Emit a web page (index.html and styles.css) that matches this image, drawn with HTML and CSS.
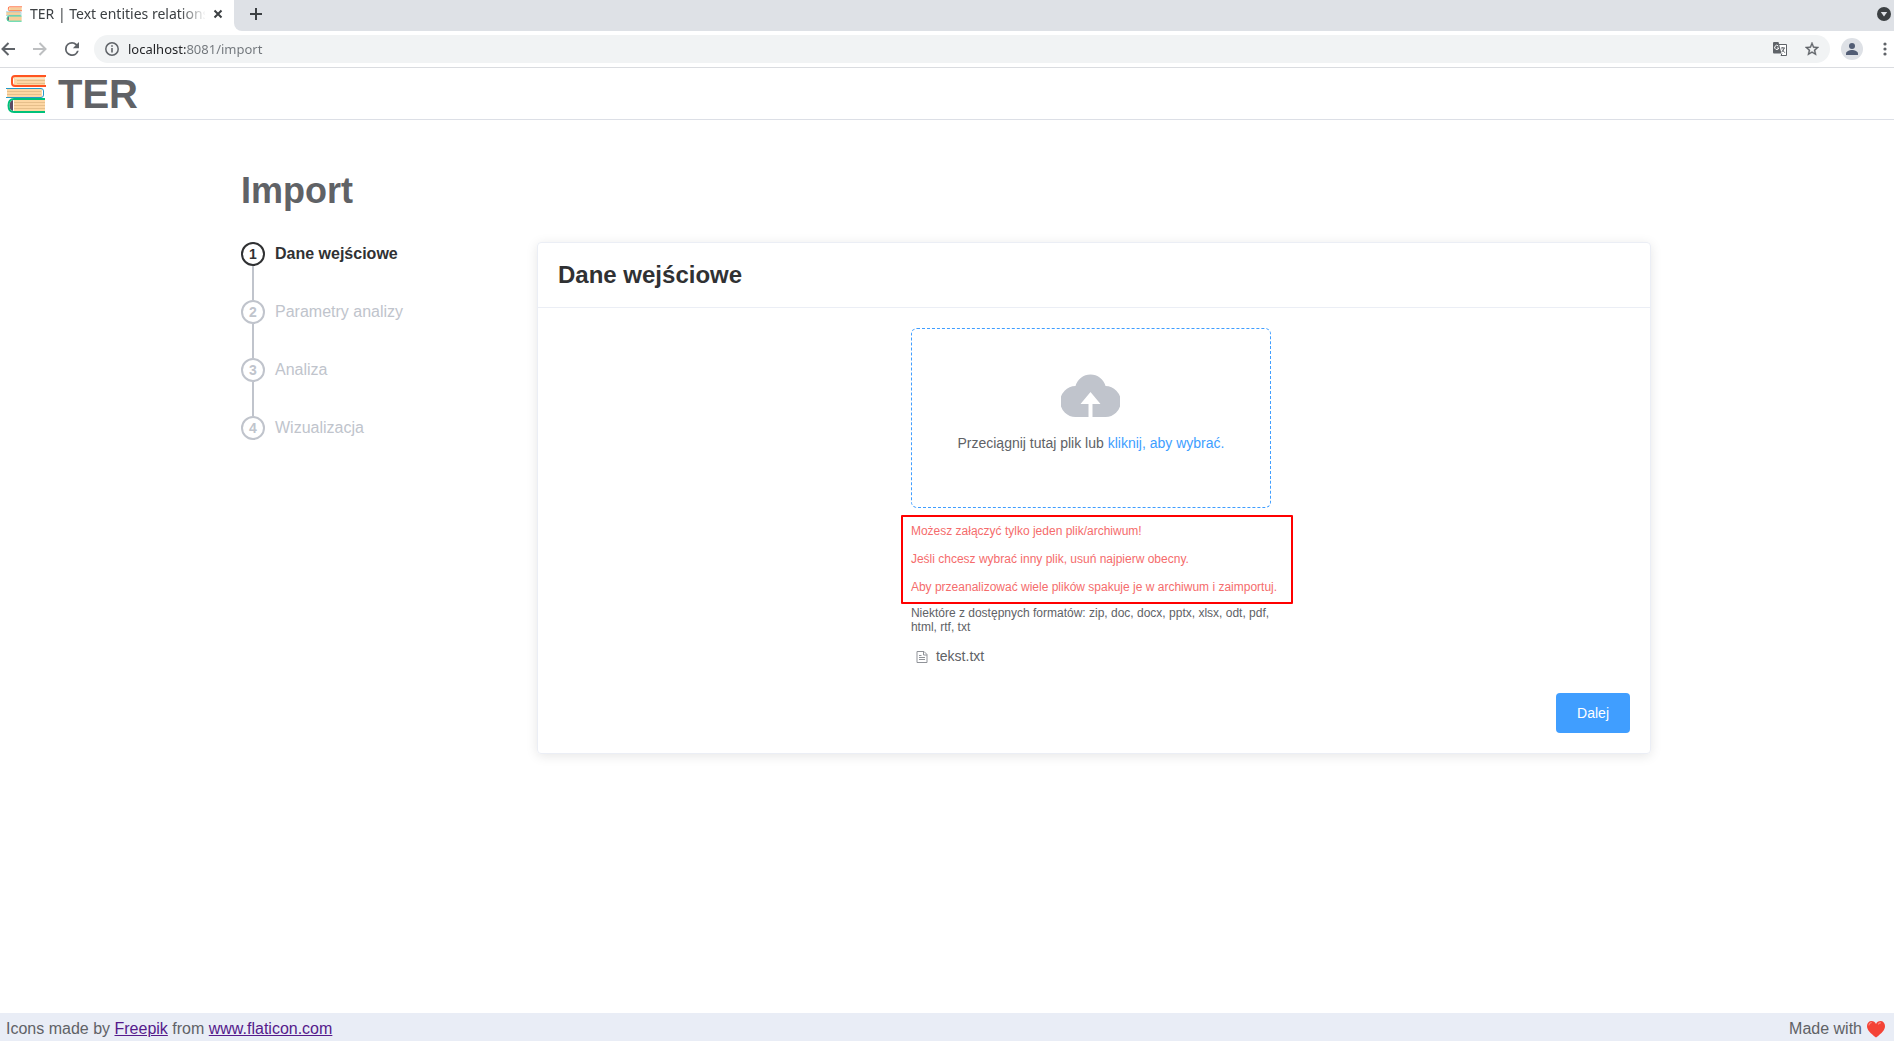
FILE: index.html
```html
<!DOCTYPE html>
<html lang="pl">
<head>
<meta charset="utf-8">
<title>TER | Text entities relations</title>
<link rel="stylesheet" href="styles.css">
</head>
<body>
<svg class="defs" width="0" height="0" aria-hidden="true">
  <symbol id="books" viewBox="0 0 40 40">
    <path d="M8 3H39V12H8z" fill="#fdd7a4"/>
    <path d="M9 4H39V5H9z" fill="#f5e6d0"/>
    <path d="M11 6.500H39M11 9.500H39" stroke="#e6bf8b" stroke-width="1"/>
    <path d="M40 2H9Q6 2 6 5V9Q6 12 9 12H40" fill="none" stroke="#ff5421" stroke-width="2"/>
    <path d="M1 15H36V23H1z" fill="#fdd7a4"/>
    <path d="M1 17.500H35M1 20.500H35" stroke="#e6bf8b" stroke-width="1"/>
    <path d="M0 14.500H35Q37.500 14.500 37.500 17V21Q37.500 23.500 35 23.500H0" fill="none" stroke="#2499c7" stroke-width="1"/>
    <path d="M8 26H39V37H8z" fill="#fdd7a4"/>
    <path d="M8 28.500H39M8 31.500H39M8 34.500H39" stroke="#e6bf8b" stroke-width="1"/>
    <path d="M7 26Q3.500 27 3.500 31.500T7 37z" fill="#5d4b63"/>
    <path d="M39 25H8Q2.500 25 2.500 31.500T8 38H39" fill="none" stroke="#00c17a" stroke-width="2"/>
  </symbol>
</svg>

<div class="browser">
  <div class="tabs">
    <div class="tab">
      <svg class="favicon"><use href="#books"/></svg>
      <span class="tab-title">TER | Text entities relations</span>
      <button class="icon-button tab-close" aria-label="Close tab"><svg width="10" height="10" viewBox="0 0 10 10"><path d="M1.500 1.500l7 7M8.500 1.500l-7 7" stroke="#3c4043" stroke-width="2"/></svg></button>
    </div>
    <div class="tab-strip">
      <button class="icon-button" aria-label="New tab"><svg width="12" height="12" viewBox="0 0 12 12"><path d="M6 0v12M0 6h12" stroke="#3c4043" stroke-width="2"/></svg></button>
      <button class="icon-button" aria-label="Search tabs"><svg width="14" height="14" viewBox="0 0 14 14"><circle cx="7" cy="7" r="7" fill="#3c4043"/><path d="M3.800 5h6.400L7 9.500z" fill="#dee1e6"/></svg></button>
    </div>
  </div>
  <div class="toolbar">
    <div class="nav">
      <button class="icon-button" aria-label="Back"><svg width="14" height="14" viewBox="0 0 14 14"><path d="M14 7H2M7.500 1L1.500 7l6 6" fill="none" stroke="#5f6368" stroke-width="2"/></svg></button>
      <button class="icon-button" aria-label="Forward" disabled><svg width="14" height="14" viewBox="0 0 14 14"><path d="M0 7h12M6.500 1l6 6-6 6" fill="none" stroke="#bdbfc1" stroke-width="2"/></svg></button>
      <button class="icon-button" aria-label="Reload"><svg width="14" height="14" viewBox="4 4 16 16"><path d="M17.650 6.350A7.960 7.960 0 0 0 12 4a8 8 0 1 0 7.730 10h-2.080A6 6 0 1 1 12 6c1.660 0 3.140.69 4.220 1.780L13 11h7V4z" fill="#5f6368"/></svg></button>
    </div>
    <div class="omnibox">
      <svg width="14" height="14" viewBox="0 0 14 14"><circle cx="7" cy="7" r="6.200" fill="none" stroke="#5f6368" stroke-width="1.500"/><path d="M7 6v4.500M7 3.300v1.500" stroke="#5f6368" stroke-width="1.600"/></svg>
      <input class="address" type="text" aria-label="Address" value="localhost:8081/import">
      <button class="icon-button" aria-label="Translate"><svg width="14" height="14" viewBox="0 0 14 14"><path d="M6 2.500h7.500v11H8" fill="#fff" stroke="#5f6368"/><path d="M1 0h4.500L8.500 11.500H1q-1 0-1-1V1q0-1 1-1z" fill="#5f6368"/><path d="M5.300 4A2.100 2.100 0 1 0 5.800 6H4" fill="none" stroke="#fff"/><path d="M8 6h4M9.800 5v1M11.200 6q-.5 2.500-2.500 4M9 7.500l2.800 3.200M8 13.500l1-2" fill="none" stroke="#5f6368"/></svg></button>
      <button class="icon-button" aria-label="Bookmark"><svg width="14" height="14" viewBox="2 2 20 20"><path d="M22 9.240l-7.190-.62L12 2 9.190 8.630 2 9.240l5.460 4.730L5.820 21 12 17.270 18.180 21l-1.630-7.030zM12 15.400l-3.760 2.270 1-4.280-3.320-2.880 4.380-.38L12 6.100l1.710 4.040 4.380.38-3.320 2.880 1 4.280z" fill="#5f6368" stroke="#5f6368" stroke-width=".5"/></svg></button>
    </div>
    <button class="icon-button" aria-label="Profile"><svg width="22" height="22" viewBox="0 0 22 22"><circle cx="11" cy="11" r="11" fill="#dee1e6"/><circle cx="11" cy="8" r="3" fill="#525d75"/><path d="M5 17v-1.500c0-2.300 3.500-3.500 6-3.500s6 1.200 6 3.500V17z" fill="#525d75"/></svg></button>
    <button class="icon-button menu" aria-label="Menu"><svg width="4" height="14" viewBox="0 0 4 14"><g fill="#5f6368"><circle cx="2" cy="2" r="1.600"/><circle cx="2" cy="7" r="1.600"/><circle cx="2" cy="12" r="1.600"/></g></svg></button>
  </div>
</div>

<header class="site-header">
  <svg class="logo"><use href="#books"/></svg>
  <span class="brand">TER</span>
</header>

<main class="content">
  <h1>Import</h1>
  <div class="columns">
    <ol class="steps">
      <li class="step active"><span class="badge">1</span><span class="step-title">Dane wejściowe</span></li>
      <li class="step"><span class="badge">2</span><span class="step-title">Parametry analizy</span></li>
      <li class="step"><span class="badge">3</span><span class="step-title">Analiza</span></li>
      <li class="step"><span class="badge">4</span><span class="step-title">Wizualizacja</span></li>
    </ol>
    <section class="card">
      <h2>Dane wejściowe</h2>
      <div class="card-body">
        <div class="upload">
          <label class="dropzone" for="file">
            <svg width="59" height="44" viewBox="0 0 59 44"><path d="M15 44A15.500 15.500 0 0 1 14.500 13 15.500 15.500 0 0 1 44.500 13 15.500 15.500 0 0 1 44 44H31.500V31H39.500L29.500 19 19.500 31H27.500V44z" fill="#c0c4cc"/></svg>
            <span>Przeciągnij tutaj plik lub <em>kliknij, aby wybrać.</em></span>
          </label>
          <input class="file-input" id="file" type="file">
          <div class="errors">
            <p>Możesz załączyć tylko jeden plik/archiwum!</p>
            <p>Jeśli chcesz wybrać inny plik, usuń najpierw obecny.</p>
            <p>Aby przeanalizować wiele plików spakuje je w archiwum i zaimportuj.</p>
          </div>
          <p class="formats">Niektóre z dostępnych formatów: zip, doc, docx, pptx, xlsx, odt, pdf, html, rtf, txt</p>
          <div class="file">
            <svg width="12" height="12" viewBox="0 0 12 12"><path d="M1 .5H8L11 3.500V11.500H1zM7.500 .5V4H11M3 4.500H5.500M3 6.500H9M3 8.500H9" fill="none" stroke="#909399"/></svg>
            <span>tekst.txt</span>
          </div>
        </div>
        <button class="next">Dalej</button>
      </div>
    </section>
  </div>
</main>

<footer class="site-footer">
  <span>Icons made by <a href="#freepik">Freepik</a> from <a href="#flaticon">www.flaticon.com</a></span>
  <span class="made">Made with <svg width="20" height="18" viewBox="0 0 20 18"><path d="M10 17.500C4 13 1 10 1 6C1 3 3 1 5.500 1 7.500 1 9.300 2.200 10 4 10.700 2.200 12.500 1 14.500 1 17 1 19 3 19 6c0 4-3 7-9 11.500z" fill="#f44336"/><path d="M3 5q.4-2 2.200-2.300M12.500 4q.8-1.200 2-1.200" fill="none" stroke="#ff8a80" stroke-width="1.200" stroke-linecap="round"/></svg></span>
</footer>
</body>
</html>
```
FILE: styles.css
```css
* { box-sizing: border-box; }

body {
  margin: 0;
  min-height: 100vh;
  display: flex;
  flex-direction: column;
  font-family: "Liberation Sans", Arial, sans-serif;
  font-size: 16px;
  color: #606266;
  background: #fff;
}

h1, h2, p, ol { margin: 0; padding: 0; }
svg { display: block; flex: none; }
.defs { position: absolute; }

.icon-button {
  display: flex;
  padding: 0;
  border: 0;
  background: none;
}

/* Browser frame */
.browser {
  font-family: "Noto Sans", sans-serif;
  border-bottom: 1px solid #dadce0;
}

.tabs {
  display: flex;
  height: 31px;
  background: linear-gradient(90deg, #fff 50%, #dee1e6 50%);
}

.tab {
  display: flex;
  align-items: center;
  width: 234px;
  padding: 0 11px 4px 6px;
  background: #fff;
}

.favicon { width: 16px; height: 16px; margin-right: 8px; }

.tab-title {
  width: 176px;
  overflow: hidden;
  white-space: nowrap;
  font-size: 14px;
  line-height: 20px;
  color: #3c4043;
  -webkit-mask-image: linear-gradient(90deg, #000 150px, transparent 176px);
  mask-image: linear-gradient(90deg, #000 150px, transparent 176px);
}

.tab-close { margin-left: 8px; }

.tab-strip {
  flex: 1;
  display: flex;
  align-items: center;
  justify-content: space-between;
  padding: 0 3px 3px 16px;
  background: #dee1e6;
  border-bottom-left-radius: 8px;
}

.toolbar {
  display: flex;
  align-items: center;
  height: 36px;
  gap: 11px;
  padding: 0 7px 0 1px;
}

.nav { display: flex; gap: 18px; padding-right: 4px; }

.menu { margin-left: 9px; }

.omnibox {
  flex: 1;
  display: flex;
  align-items: center;
  height: 28px;
  gap: 18px;
  padding: 0 11px;
  border-radius: 14px;
  background: #f1f3f4;
}

.address {
  flex: 1;
  margin-left: -9px;
  padding: 0;
  border: 0;
  outline: 0;
  font: 13px/20px "Noto Sans", sans-serif;
  color: #70757a;
  background: linear-gradient(90deg, #202124 58px, #70757a 58px);
  -webkit-background-clip: text;
  background-clip: text;
  -webkit-text-fill-color: transparent;
}

/* Site header */
.site-header {
  display: flex;
  align-items: center;
  gap: 12px;
  height: 52px;
  padding: 0 6px;
  border-bottom: 1px solid #dcdfe6;
}

.logo { width: 40px; height: 40px; }
.brand { font-size: 40px; line-height: 46px; font-weight: bold; }

/* Content */
.content { flex: 1; padding: 50px 243px 40px 241px; }

h1 { font-size: 36px; line-height: 42px; margin-bottom: 30px; }

.columns {
  display: grid;
  grid-template-columns: 296px 1fr;
  align-items: start;
}

.steps { list-style: none; }

.step {
  position: relative;
  display: flex;
  gap: 10px;
  height: 58px;
  line-height: 24px;
  color: #c0c4cc;
}

.step:not(:last-child)::before {
  content: "";
  position: absolute;
  left: 11px;
  top: 24px;
  bottom: 0;
  width: 2px;
  background: #c0c4cc;
}

.badge {
  width: 24px;
  height: 24px;
  border: 2px solid;
  border-radius: 50%;
  text-align: center;
  font-size: 14px;
  line-height: 20px;
  font-weight: bold;
}

.active { color: #303133; font-weight: bold; }

.card {
  border: 1px solid #ebeef5;
  border-radius: 4px;
  box-shadow: 0 2px 12px rgba(0, 0, 0, 0.1);
  color: #303133;
}

h2 {
  padding: 18px 20px;
  border-bottom: 1px solid #ebeef5;
  font-size: 24px;
  line-height: 28px;
}

.card-body {
  display: flex;
  flex-direction: column;
  align-items: center;
  padding: 20px;
}

.upload { color: #606266; }

.dropzone {
  display: flex;
  flex-direction: column;
  align-items: center;
  gap: 18px;
  width: 360px;
  height: 180px;
  padding-top: 44px;
  border: 1px dashed #409eff;
  border-radius: 6px;
  font-size: 14px;
  line-height: 16px;
  cursor: pointer;
}

.dropzone em { font-style: normal; color: #409eff; }

.file-input {
  position: absolute;
  width: 1px;
  height: 1px;
  opacity: 0;
}

.errors {
  position: relative;
  display: grid;
  gap: 14px;
  margin-top: 16px;
  font-size: 12px;
  line-height: 14px;
  color: #f56c6c;
  white-space: nowrap;
}

.errors::before {
  content: "";
  position: absolute;
  inset: -9px -16px -10px -10px;
  border: 2px solid #f00;
  border-radius: 1px;
}

.formats {
  max-width: 360px;
  margin-top: 12px;
  font-size: 12px;
  line-height: 14px;
}

.file {
  display: flex;
  align-items: center;
  gap: 8px;
  margin-top: 10px;
  padding-left: 5px;
  font-size: 14px;
  line-height: 25px;
}

.next {
  align-self: flex-end;
  height: 40px;
  margin-top: 24px;
  padding: 0 21px;
  border: 0;
  border-radius: 4px;
  background: #409eff;
  color: #fff;
  font: 14px/14px "Liberation Sans", Arial, sans-serif;
}

/* Footer */
.site-footer {
  display: flex;
  justify-content: space-between;
  padding: 7px 8px 3px 6px;
  line-height: 18px;
  background: #e9edf6;
}

.site-footer a { color: #551a8b; }
.made { display: flex; align-items: center; gap: 4px; }
```
